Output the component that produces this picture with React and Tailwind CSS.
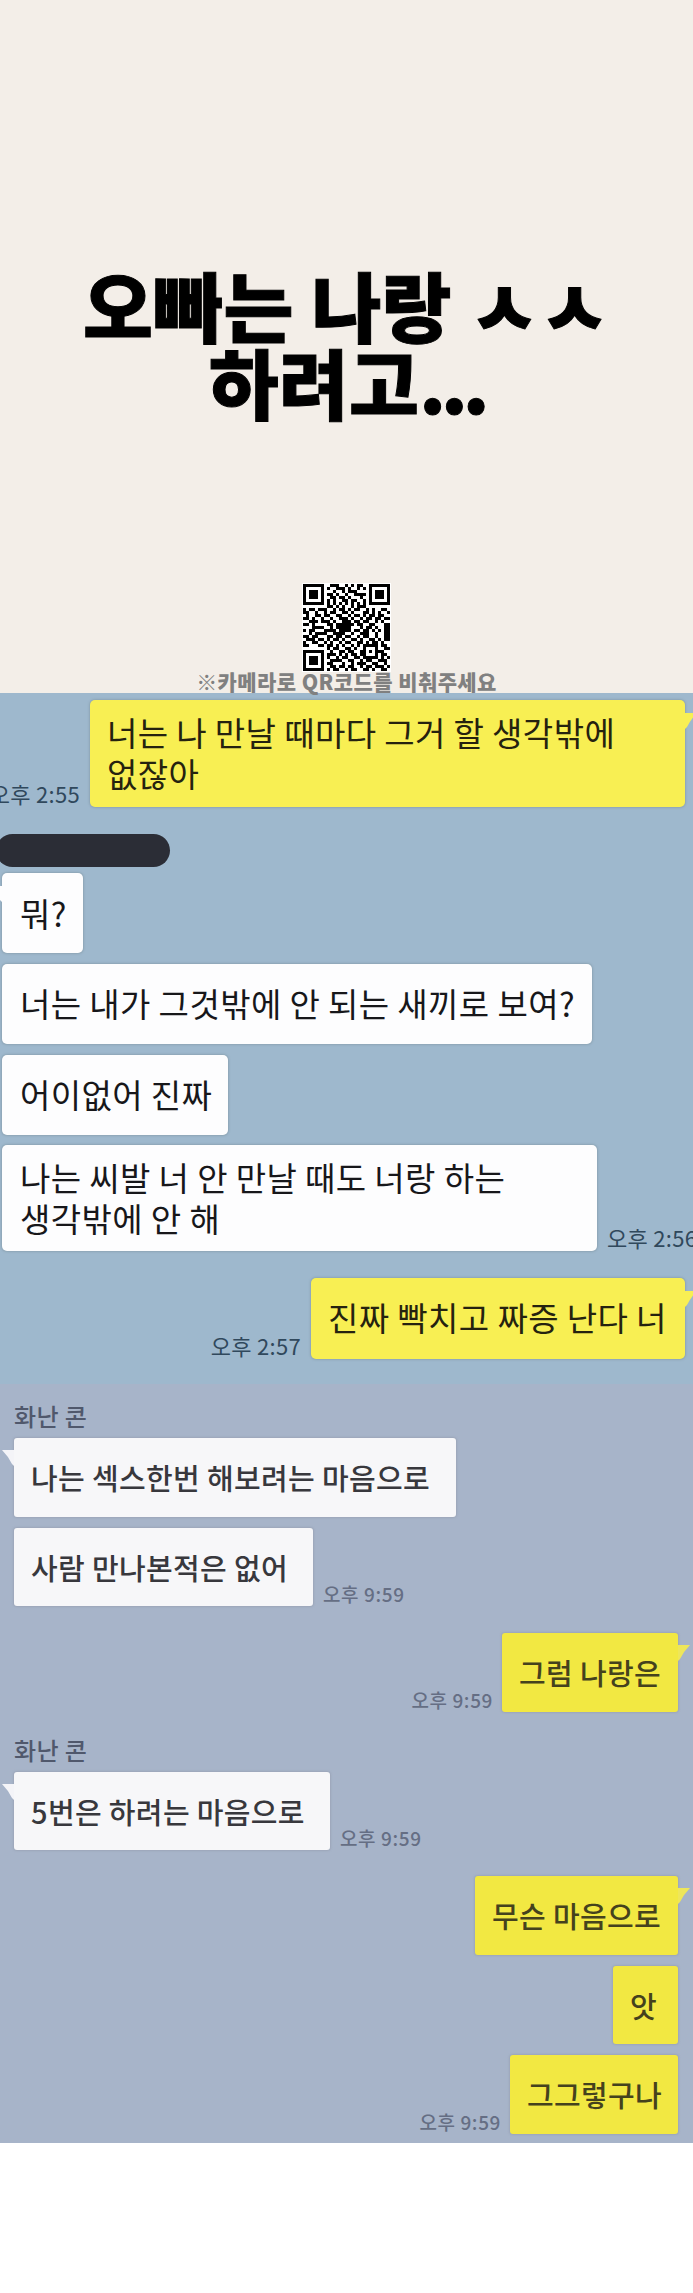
const QR_ROWS = [
  '11111110011100101011001111111',
  '10000010100111010010101000001',
  '10111010001001011100001011101',
  '10111010110100100111101011101',
  '10111010011011010001001011101',
  '10000010101001101100101000001',
  '11111110101010101010101111111',
  '00000000110101001011100000000',
  '10110111001011010110010100110',
  '11001001011001101000110101001',
  '01001101100110010110101101100',
  '11010010010011101001011011011',
  '00111011101001110110110010100',
  '11010000110111111011001100011',
  '00011110010111110001011010011',
  '10110001111011110110110101011',
  '00101111001111001001110010011',
  '11011000110110110010110010011',
  '01110110101101001101001101011',
  '10011001010010110011010110100',
  '11000110110101001010111110110',
  '00000000101100110100100010011',
  '11111110010011011001101011100',
  '10000010111010101101100010110',
  '10111010100101100110111110101',
  '10111010011110011001011001110',
  '10111010110001001011100110010',
  '10000010011011011001011011101',
  '11111110101100101100110100110',
];

const firstChat = [
  {
    row: 'mt-[7px] justify-end pr-2',
    time: '오후 2:55',
    mine: true,
    tail: true,
    bubble: 'w-[595px] h-[107px] pl-[17px] pt-[12px]',
    lines: ['너는 나 만날 때마다 그거 할 생각밖에', '없잖아'],
  },
  { redacted: true },
  { row: 'mt-[6px]', tail: true, bubble: 'w-[81px] h-20 pl-[18px] pt-[20px]', lines: ['뭐?'] },
  {
    row: 'mt-[11px]',
    bubble: 'w-[590px] h-20 pl-[18px] pt-[19px]',
    lines: ['너는 내가 그것밖에 안 되는 새끼로 보여?'],
  },
  { row: 'mt-[11px]', bubble: 'w-[226px] h-20 pl-[18px] pt-[19px]', lines: ['어이없어 진짜'] },
  {
    row: 'mt-[10px]',
    time: '오후 2:56',
    bubble: 'w-[595px] h-[106px] pl-[18px] pt-[12px]',
    lines: ['나는 씨발 너 안 만날 때도 너랑 하는', '생각밖에 안 해'],
  },
  {
    row: 'mt-[27px] justify-end pr-2',
    time: '오후 2:57',
    mine: true,
    tail: true,
    bubble: 'w-[374px] h-[81px] pl-[17px] pt-[19px]',
    lines: ['진짜 빡치고 짜증 난다 너'],
  },
];

const secondChat = [
  { name: '화난 콘', row: 'mt-[15px] mb-[3px]' },
  { row: 'mt-[3px]', tail: true, bubble: 'w-[442px] pl-[17px]', text: '나는 섹스한번 해보려는 마음으로' },
  { row: 'mt-[11px]', time: '오후 9:59', bubble: 'w-[299px] pl-[17px]', text: '사람 만나본적은 없어' },
  { row: 'mt-[27px]', mine: true, tail: true, time: '오후 9:59', bubble: 'w-[176px] pl-[17px]', text: '그럼 나랑은' },
  { name: '화난 콘', row: 'mt-[21px] mb-[3px]' },
  { row: 'mt-[3px]', tail: true, time: '오후 9:59', bubble: 'w-[316px] pl-[17px]', text: '5번은 하려는 마음으로' },
  { row: 'mt-[26px]', mine: true, tail: true, bubble: 'w-[203px] pl-[17px]', text: '무슨 마음으로' },
  { row: 'mt-[11px]', mine: true, bubble: 'w-[65px] pl-[17px]', text: '앗' },
  { row: 'mt-[11px]', mine: true, time: '오후 9:59', bubble: 'w-[168px] pl-[17px]', text: '그그렇구나' },
];

const QrCode = () => (
  <svg className="w-[89px] h-[89px] bg-white" viewBox="-1 -1 89 89" shapeRendering="crispEdges">
    {QR_ROWS.map((row, y) =>
      row.split('').map((cell, x) =>
        cell === '1' ? <rect key={`${x}-${y}`} x={x * 3} y={y * 3} width="3" height="3" /> : null
      )
    )}
  </svg>
);

const Tail = ({ mine, className }) => (
  <svg className={`absolute ${className}`} width="12" height="16" viewBox="0 0 12 16" fill="currentColor">
    {mine ? <path d="M0 0H12Q6 6 2 14L0 16Z" /> : <path d="M12 0H0Q6 6 10 14L12 16Z" />}
  </svg>
);

const FirstMessage = ({ msg }) => {
  if (msg.redacted) {
    return <div className="mt-[27px] -ml-1 w-[174px] h-[33px] rounded-full bg-[#2b2d36]" />;
  }
  const time = (
    <span className="mb-[1px] text-[22px] leading-[26px] tracking-[0.3px] text-[#30485c]">{msg.time}</span>
  );
  return (
    <div className={`flex items-end whitespace-nowrap ${msg.row} ${msg.mine ? 'gap-[10px]' : 'pl-[2px] gap-[10px]'}`}>
      {msg.mine && time}
      <div
        className={`relative shrink-0 rounded-[5px] text-[33px] leading-[41px] tracking-[0.4px] shadow-[0_0_2px_1px_rgba(120,140,150,0.45)] ${
          msg.mine ? 'bg-[#f8ef53] text-[#25220f]' : 'bg-[#fdfdfe] text-[#17171a]'
        } ${msg.bubble}`}
      >
        {msg.tail && (
          <Tail
            mine={msg.mine}
            className={msg.mine ? 'left-full top-[13px] text-[#f8ef53]' : 'right-full top-[13px] text-[#fdfdfe]'}
          />
        )}
        {msg.lines.map((line) => (
          <p key={line}>{line}</p>
        ))}
      </div>
      {!msg.mine && msg.time && time}
    </div>
  );
};

const SecondMessage = ({ msg }) => {
  if (msg.name) {
    return <p className={`text-[24px] leading-[33px] font-medium tracking-[0.4px] text-[#50586c] ${msg.row}`}>{msg.name}</p>;
  }
  const time = (
    <span className="mb-[-1px] text-[19px] leading-[26px] font-medium tracking-[0.6px] text-[#656e84]">{msg.time}</span>
  );
  return (
    <div className={`flex items-end whitespace-nowrap ${msg.row} ${msg.mine ? 'justify-end gap-[9px]' : 'gap-[10px]'}`}>
      {msg.mine && msg.time && time}
      <div
        className={`relative h-[78.5px] shrink-0 rounded-[3px] pt-[19px] text-[29px] leading-[41px] font-medium tracking-[0.35px] shadow-[0_0_2px_1px_rgba(140,145,160,0.4)] ${
          msg.mine ? 'bg-[#f2e842] text-[#45421d]' : 'bg-[#f7f7f9] text-[#38383d]'
        } ${msg.bubble}`}
      >
        {msg.tail && (
          <Tail
            mine={msg.mine}
            className={msg.mine ? 'left-full top-[12px] text-[#eee65a]' : 'right-full top-[12px] text-[#f4f4f8]'}
          />
        )}
        {msg.text}
      </div>
      {!msg.mine && msg.time && time}
    </div>
  );
};

const App = () => {
  return (
    <div className="w-[693px] h-[2293px] overflow-hidden bg-white font-['Noto_Sans_CJK_KR',sans-serif]">
      {/* Title card */}
      <header className="flex h-[693px] flex-col items-center bg-[#f3eee8] pt-[266px]">
        <h1 className="text-center text-[76px] leading-[77px] font-black tracking-[0.3px] text-black whitespace-nowrap [-webkit-text-stroke:1px_black]">
          오빠는 나랑 ㅅㅅ
          <br />
          하려고<span className="tracking-[-5px]">...</span>
        </h1>
        <div className="mt-[163px]">
          <QrCode />
        </div>
        <p className="mt-[-2px] text-[21px] leading-[22px] font-black tracking-[0.4px] text-[#808080] whitespace-nowrap">
          ※카메라로 QR코드를 비춰주세요
        </p>
      </header>

      {/* First conversation */}
      <section className="flex h-[691px] flex-col overflow-hidden bg-[#9eb8cd]">
        {firstChat.map((msg, i) => (
          <FirstMessage key={i} msg={msg} />
        ))}
      </section>

      {/* Second conversation */}
      <section className="flex h-[759px] flex-col overflow-hidden bg-[#a7b4c9] pl-[14px] pr-[15px]">
        {secondChat.map((msg, i) => (
          <SecondMessage key={i} msg={msg} />
        ))}
      </section>
    </div>
  );
};

export default App;
